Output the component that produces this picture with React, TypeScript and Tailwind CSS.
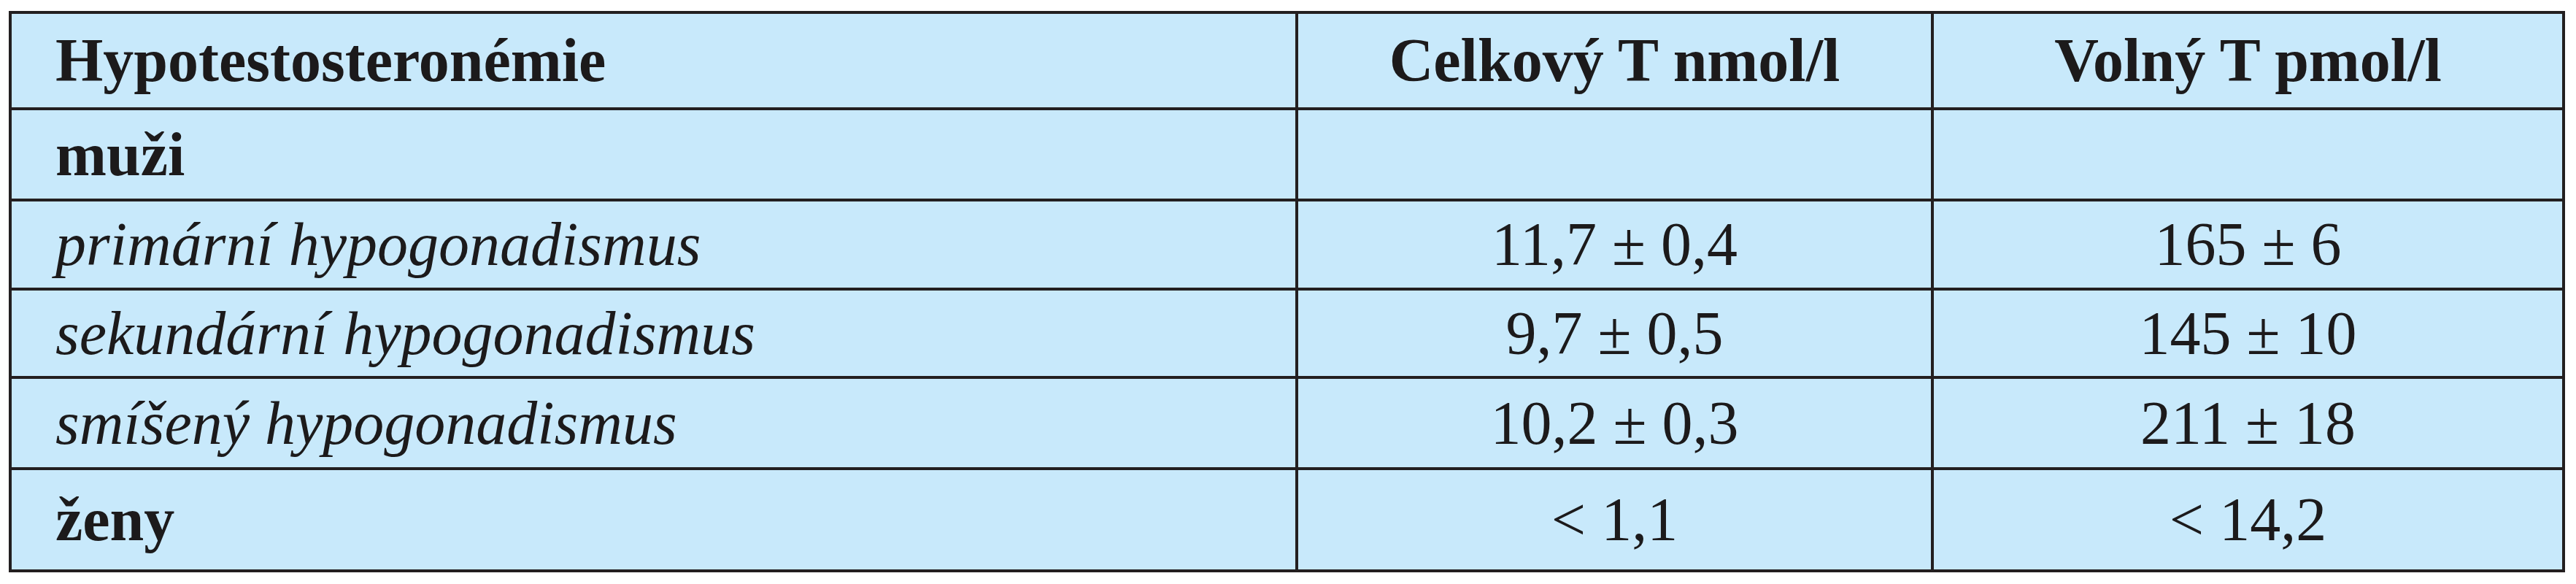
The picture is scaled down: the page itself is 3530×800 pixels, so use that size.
const ROWS: { label: string; italic?: boolean; total: string; free: string; h: string }[] = [
  { label: 'muži', total: '', free: '', h: 'h-[125px]' },
  { label: 'primární hypogonadismus', italic: true, total: '11,7 ± 0,4', free: '165 ± 6', h: 'h-[122px]' },
  { label: 'sekundární hypogonadismus', italic: true, total: '9,7 ± 0,5', free: '145 ± 10', h: 'h-[121px]' },
  { label: 'smíšený hypogonadismus', italic: true, total: '10,2 ± 0,3', free: '211 ± 18', h: 'h-[125px]' },
  { label: 'ženy', total: '< 1,1', free: '< 14,2', h: 'h-[140px]' },
];

const cell = 'border-r-4 border-b-4 border-[#231f20] flex items-center';

export default function App() {
  return (
    <div className="w-[3530px] h-[800px] bg-white pt-[15px] pl-[12px] text-[#1c1a1b] font-[family-name:'Liberation_Serif','Times_New_Roman',serif] text-[84px] leading-none">
      <div className="grid grid-cols-[1763px_871px_865px] w-fit border-l-4 border-t-4 border-[#231f20] bg-[#c8e9fb]">
        {/* Header */}
        <div className={`${cell} h-[132px] pl-[60px] font-bold`}>Hypotestosteronémie</div>
        <div className={`${cell} h-[132px] justify-center font-bold`}>Celkový T nmol/l</div>
        <div className={`${cell} h-[132px] justify-center font-bold`}>Volný T pmol/l</div>

        {ROWS.map((r) => (
          <div key={r.label} className="contents">
            <div className={`${cell} ${r.h} pl-[60px] ${r.italic ? 'italic' : 'font-bold'}`}>{r.label}</div>
            <div className={`${cell} ${r.h} justify-center`}>{r.total}</div>
            <div className={`${cell} ${r.h} justify-center`}>{r.free}</div>
          </div>
        ))}
      </div>
    </div>
  );
}
